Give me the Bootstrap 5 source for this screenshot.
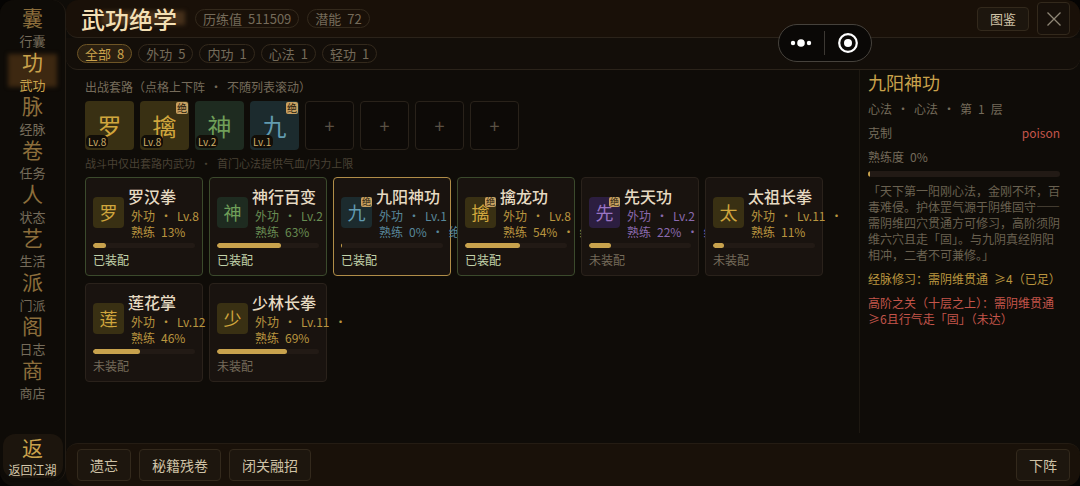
<!DOCTYPE html>
<html lang="zh-CN" data-bs-theme="dark">
<head>
<meta charset="utf-8">
<meta name="viewport" content="width=device-width, initial-scale=1">
<title>武功绝学</title>
<link href="https://cdn.jsdelivr.net/npm/bootstrap@5.3.0/dist/css/bootstrap.min.css" rel="stylesheet">
<style>
  :root { --gold:#c9a24c; --line:#2b231a; --dim:#756b5a; --cream:#e6dac2; --warn:#c4554a; }
  body { font-family:"Noto Sans CJK SC",sans-serif; font-size:12px; line-height:16px; color:var(--dim); background:#050403; }
  a { color:inherit; text-decoration:none; }
  button { font-family:inherit; }
  .shell { min-height:100vh; background:#0f0c08; border-radius:14px; }

  .rail { width:66px; flex:none; border-right:1px solid #241d15; border-radius:14px; margin-bottom:4px; background:#0e0b07; }
  .rail-list { padding-top:5px; }
  .rail-link { position:relative; height:44px; font-size:13px; line-height:20px; isolation:isolate; }
  .rail-link b { font-size:21px; line-height:24px; margin-bottom:2px; font-weight:400; color:#8c6e3b; }
  .rail-link.active, .rail-link.active b, .rail-back b { color:var(--gold); }
  .rail-link.active::before { content:""; position:absolute; z-index:-1; inset:5px 8px 6px; background:#3d2811; filter:blur(2px); }
  .rail-back { width:60px; height:44px; margin-bottom:4px; background:#1c150d; border-radius:12px; color:#d5c7aa; line-height:20px; }
  .rail-back b { font-size:21px; line-height:26px; font-weight:400; }

  .bar-top { height:38px; background:#191008; border-bottom:1px solid var(--line); border-radius:12px; padding:0 10px 0 15px; }
  .bar-tabs { height:32px; background:#130e09; border-bottom:1px solid var(--line); border-radius:0 0 12px 12px; padding:0 11px; gap:6px; }
  .main-title { position:relative; isolation:isolate; font-size:24px; line-height:32px; font-weight:500; color:#f3dfb4; margin:0 18px 0 0; }
  .main-title::before { content:""; position:absolute; z-index:-1; inset:8px -8px 10px 20px; background:#46301a; filter:blur(2px); }
  .pill { display:inline-flex; align-items:center; gap:6px; height:19px; padding:0 7px; font-size:13px; line-height:16px; border:1px solid #33291c; border-radius:10px; background:transparent; color:var(--dim); white-space:nowrap; }
  .pill.active { color:var(--gold); border-color:#6e5526; background:#2a1f10; }
  .plate { background:#1d160e; border:1px solid #33291c; border-radius:4px; color:#cfc2a6; font-size:14px; line-height:20px; padding:5px 12px; }
  .plate-sm { font-size:13px; padding:1px 12px; }
  .plate-x { width:33px; height:33px; padding:0; background:#17100a; }
  .capsule { position:absolute; left:72%; top:24px; width:94px; height:38px; border:1px solid #46423c; border-radius:19px; background:#0a0806; z-index:3; }
  .capsule button { flex:1; border:0; background:none; padding:0; line-height:0; }
  .capsule-rule { width:1px; height:24px; background:#3c3833; }

  .work { padding:9px 8px 8px 19px; min-width:0; }
  .slots { gap:6px; margin:6px 0 5px; }
  .slot { position:relative; width:49px; height:49px; border:1px solid transparent; border-radius:4px; font-size:24px; line-height:47px; padding:0; text-align:center; }
  .slot.free { border-color:#29221a; background:#0d0a07; color:#5a5144; font-size:18px; }
  .lv { position:absolute; left:0; bottom:1px; padding:0 2px; height:13px; line-height:13px; font-size:10px; border-radius:5px; background:#120e08; color:#cfae68; }
  .seal { position:absolute; right:0; top:0; width:12px; height:12px; font-size:10px; line-height:12px; border-radius:2px; background:#c7a060; color:#241a0d; text-align:center; }
  .gilt { background:#393013; color:#d0a63d; }
  .jade { background:#1e2b20; color:#6f9f59; }
  .aqua { background:#1c2b2e; color:#629bb0; }
  .plum { background:#2c1e40; color:#9a74c4; }
  .t-gilt { color:#b9953f; } .t-jade { color:#688c52; } .t-aqua { color:#58879a; } .t-plum { color:#8a6aae; }
  .t-warn { color:var(--warn); }
  .note { font-size:11px; color:#494134; }

  .skills { display:grid; grid-template-columns:repeat(auto-fill,118px); gap:7px 6px; margin-top:6px; }
  .skill { height:99px; padding:6px 7px; background:#19130f; border:1px solid #2a221b; border-radius:4px; color:var(--dim); }
  .skill.on { border-color:#3b4a2c; }
  .skill.picked { border-color:#b08d48; }
  .skill.on .state, .skill.picked .state { color:#c3d3ab; }
  .skill h2 { font-size:16px; line-height:24px; font-weight:500; color:var(--cream); margin:0; white-space:nowrap; }
  .glyph { position:relative; flex:none; width:31px; height:31px; border-radius:4px; font-size:18px; line-height:31px; text-align:center; }
  .glyph .seal { width:11px; height:10px; font-size:9px; line-height:10px; }
  .meta { padding-left:3px; white-space:nowrap; }
  .dot { display:inline-block; width:22px; text-align:center; }
  .gap-l { margin-left:6px; }
  .progress { --bs-progress-height:6px; --bs-progress-bg:#221a15; --bs-progress-bar-bg:#c8a24d; --bs-progress-border-radius:3px; }
  .progress-bar { border-radius:3px; }
  .skill .progress { margin:3px 0; }
  .state { line-height:18px; }

  .detail { width:221px; flex:none; padding:2px 20px 0 8px; margin-bottom:10px; border-left:1px solid #1d1811; }
  .detail h2 { font-size:18px; line-height:20px; font-weight:400; color:var(--gold); margin:0 0 9px; }
  .detail p { margin:0 0 8px; white-space:nowrap; }
  .detail .progress { margin:6px 0; }
  .lore { color:#6a6150; }
  .bar-foot { height:43px; background:#191109; border-top:1px solid #241c13; border-radius:12px; padding:0 10px 0 11px; gap:8px; }
</style>
</head>
<body>
<div class="shell d-flex position-relative overflow-hidden">
  <nav class="rail d-flex flex-column justify-content-between" aria-label="主菜单">
    <div class="rail-list d-flex flex-column text-center">
      <a href="#" class="rail-link d-flex flex-column"><b>囊</b>行囊</a>
      <a href="#" class="rail-link d-flex flex-column active" aria-current="page"><b>功</b>武功</a>
      <a href="#" class="rail-link d-flex flex-column"><b>脉</b>经脉</a>
      <a href="#" class="rail-link d-flex flex-column"><b>卷</b>任务</a>
      <a href="#" class="rail-link d-flex flex-column"><b>人</b>状态</a>
      <a href="#" class="rail-link d-flex flex-column"><b>艺</b>生活</a>
      <a href="#" class="rail-link d-flex flex-column"><b>派</b>门派</a>
      <a href="#" class="rail-link d-flex flex-column"><b>阁</b>日志</a>
      <a href="#" class="rail-link d-flex flex-column"><b>商</b>商店</a>
    </div>
    <a href="#" class="rail-back d-flex flex-column align-self-center text-center"><b>返</b>返回江湖</a>
  </nav>

  <div class="d-flex flex-column flex-grow-1">
    <header class="bar-top d-flex align-items-center">
      <h1 class="main-title">武功绝学</h1>
      <span class="pill"><span>历练值</span><span>511509</span></span>
      <span class="pill ms-2"><span>潜能</span><span>72</span></span>
      <button type="button" class="plate plate-sm ms-auto">图鉴</button>
      <button type="button" class="plate plate-x ms-2 d-flex align-items-center justify-content-center" aria-label="关闭">
        <svg width="14" height="14" viewBox="0 0 14 14" stroke="#8f8676" stroke-width="1.3"><path d="M.5.5l13 13M13.5.5l-13 13"/></svg>
      </button>
    </header>
    <div class="bar-tabs d-flex align-items-center">
      <button type="button" class="pill active"><span>全部</span><span>8</span></button>
      <button type="button" class="pill"><span>外功</span><span>5</span></button>
      <button type="button" class="pill"><span>内功</span><span>1</span></button>
      <button type="button" class="pill"><span>心法</span><span>1</span></button>
      <button type="button" class="pill"><span>轻功</span><span>1</span></button>
    </div>

    <div class="d-flex flex-grow-1">
      <main class="work flex-grow-1">
        <div>出战套路（点格上下阵<span class="dot">·</span>不随列表滚动）</div>
        <div class="slots d-flex">
          <button type="button" class="slot gilt">罗<span class="lv">Lv.8</span></button>
          <button type="button" class="slot gilt">擒<span class="lv">Lv.8</span><span class="seal">绝</span></button>
          <button type="button" class="slot jade">神<span class="lv">Lv.2</span></button>
          <button type="button" class="slot aqua">九<span class="lv">Lv.1</span><span class="seal">绝</span></button>
          <button type="button" class="slot free">+</button>
          <button type="button" class="slot free">+</button>
          <button type="button" class="slot free">+</button>
          <button type="button" class="slot free">+</button>
        </div>
        <div class="note">战斗中仅出套路内武功<span class="dot">·</span>首门心法提供气血/内力上限</div>

        <div class="skills">
          <article class="card skill on">
            <div class="d-flex align-items-center gap-1"><span class="glyph gilt">罗</span>
              <div><h2>罗汉拳</h2><div class="meta t-gilt">外功<span class="dot">·</span>Lv.8<br>熟练<span class="gap-l">13%</span></div></div></div>
            <div class="progress"><div class="progress-bar" style="width:13%"></div></div><div class="state">已装配</div>
          </article>
          <article class="card skill on">
            <div class="d-flex align-items-center gap-1"><span class="glyph jade">神</span>
              <div><h2>神行百变</h2><div class="meta t-jade">外功<span class="dot">·</span>Lv.2<br>熟练<span class="gap-l">63%</span></div></div></div>
            <div class="progress"><div class="progress-bar" style="width:63%"></div></div><div class="state">已装配</div>
          </article>
          <article class="card skill picked">
            <div class="d-flex align-items-center gap-1"><span class="glyph aqua">九<span class="seal">绝</span></span>
              <div><h2>九阳神功</h2><div class="meta t-aqua">外功<span class="dot">·</span>Lv.1<br>熟练<span class="gap-l">0%</span><span class="dot">·</span>绝学</div></div></div>
            <div class="progress"><div class="progress-bar" style="width:1%"></div></div><div class="state">已装配</div>
          </article>
          <article class="card skill on">
            <div class="d-flex align-items-center gap-1"><span class="glyph gilt">擒<span class="seal">绝</span></span>
              <div><h2>擒龙功</h2><div class="meta t-gilt">外功<span class="dot">·</span>Lv.8<br>熟练<span class="gap-l">54%</span><span class="dot">·</span>绝</div></div></div>
            <div class="progress"><div class="progress-bar" style="width:54%"></div></div><div class="state">已装配</div>
          </article>
          <article class="card skill">
            <div class="d-flex align-items-center gap-1"><span class="glyph plum">先<span class="seal">绝</span></span>
              <div><h2>先天功</h2><div class="meta t-plum">外功<span class="dot">·</span>Lv.2<br>熟练<span class="gap-l">22%</span><span class="dot">·</span>绝</div></div></div>
            <div class="progress"><div class="progress-bar" style="width:22%"></div></div><div class="state">未装配</div>
          </article>
          <article class="card skill">
            <div class="d-flex align-items-center gap-1"><span class="glyph gilt">太</span>
              <div><h2>太祖长拳</h2><div class="meta t-gilt">外功<span class="dot">·</span>Lv.11<span class="dot">·</span><br>熟练<span class="gap-l">11%</span></div></div></div>
            <div class="progress"><div class="progress-bar" style="width:11%"></div></div><div class="state">未装配</div>
          </article>
          <article class="card skill">
            <div class="d-flex align-items-center gap-1"><span class="glyph gilt">莲</span>
              <div><h2>莲花掌</h2><div class="meta t-gilt">外功<span class="dot">·</span>Lv.12<br>熟练<span class="gap-l">46%</span></div></div></div>
            <div class="progress"><div class="progress-bar" style="width:46%"></div></div><div class="state">未装配</div>
          </article>
          <article class="card skill">
            <div class="d-flex align-items-center gap-1"><span class="glyph gilt">少</span>
              <div><h2>少林长拳</h2><div class="meta t-gilt">外功<span class="dot">·</span>Lv.11<span class="dot">·</span><br>熟练<span class="gap-l">69%</span></div></div></div>
            <div class="progress"><div class="progress-bar" style="width:69%"></div></div><div class="state">未装配</div>
          </article>
        </div>
      </main>

      <aside class="detail">
        <h2>九阳神功</h2>
        <p>心法<span class="dot">·</span>心法<span class="dot">·</span>第<span class="gap-l">1</span><span class="gap-l">层</span></p>
        <p class="d-flex justify-content-between"><span>克制</span><span class="t-warn">poison</span></p>
        <p class="mb-0">熟练度<span class="gap-l">0%</span></p>
        <div class="progress rounded-1"><div class="progress-bar" style="width:1%"></div></div>
        <p class="lore">「天下第一阳刚心法，金刚不坏，百<br>毒难侵。护体罡气源于阴维固守——<br>需阴维四穴贯通方可修习，高阶须阴<br>维六穴且走「固」。与九阴真经阴阳<br>相冲，二者不可兼修。」</p>
        <p class="t-gilt">经脉修习：需阴维贯通<span class="gap-l">≥4（已足）</span></p>
        <p class="t-warn">高阶之关（十层之上）：需阴维贯通<br>≥6且行气走「固」（未达）</p>
      </aside>
    </div>

    <footer class="bar-foot d-flex align-items-center">
      <button type="button" class="plate">遗忘</button>
      <button type="button" class="plate">秘籍残卷</button>
      <button type="button" class="plate">闭关融招</button>
      <button type="button" class="plate ms-auto">下阵</button>
    </footer>
  </div>

  <div class="capsule d-flex align-items-center">
    <button type="button" aria-label="更多"><svg width="22" height="10" viewBox="0 0 22 10" fill="#fff"><circle cx="3" cy="5" r="2.2"/><circle cx="11" cy="5" r="3.8"/><circle cx="19" cy="5" r="2.2"/></svg></button>
    <span class="capsule-rule"></span>
    <button type="button" aria-label="退出"><svg width="20" height="20" viewBox="0 0 20 20"><circle cx="10" cy="10" r="8.8" fill="none" stroke="#fff" stroke-width="2.2"/><circle cx="10" cy="10" r="4" fill="#fff"/></svg></button>
  </div>
</div>
<script src="https://cdn.jsdelivr.net/npm/bootstrap@5.3.0/dist/js/bootstrap.bundle.min.js"></script>
</body>
</html>
